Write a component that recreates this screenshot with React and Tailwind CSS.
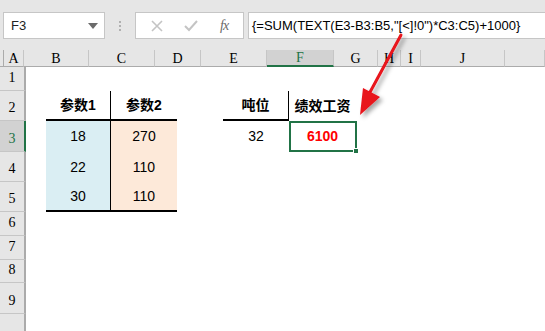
import React from 'react'

const cols = [
  { k: 'A', w: 'w-[20px]' },
  { k: 'B', w: 'w-[65px]' },
  { k: 'C', w: 'w-[66px]' },
  { k: 'D', w: 'w-[46px]' },
  { k: 'E', w: 'w-[66px]' },
  { k: 'F', w: 'w-[67px]' },
  { k: 'G', w: 'w-[44px]' },
  { k: 'H', w: 'w-[23px]' },
  { k: 'I', w: 'w-[20px]' },
  { k: 'J', w: 'w-[84px]' },
  { k: 'K', w: 'w-[40px]' },
]

// row 10 is only partly in view, its label sits below the window
const rows = [
  { n: 1, h: 'h-[24px]' },
  { n: 2, h: 'h-[30px]' },
  { n: 3, h: 'h-[31px]' },
  { n: 4, h: 'h-[30px]' },
  { n: 5, h: 'h-[30px]' },
  { n: 6, h: 'h-[24px]' },
  { n: 7, h: 'h-[24px]' },
  { n: 8, h: 'h-[23px]' },
  { n: 9, h: 'h-[31px]' },
  { n: 10, h: 'h-[30px]', hidden: true },
]

const data = {
  B2: { v: '参数1', cls: 'font-bold text-black border-r border-b-2 border-black' },
  C2: { v: '参数2', cls: 'font-bold text-black border-b-2 border-black' },
  E2: { v: '吨位', cls: 'font-bold text-black border-r border-b-2 border-black' },
  F2: { v: '绩效工资', cls: 'font-bold text-black' },
  B3: { v: '18', cls: 'text-black bg-[#daeef3] border-r border-black' },
  C3: { v: '270', cls: 'text-black bg-[#fde9d9]' },
  B4: { v: '22', cls: 'text-black bg-[#daeef3] border-r border-black' },
  C4: { v: '110', cls: 'text-black bg-[#fde9d9]' },
  B5: { v: '30', cls: 'text-black bg-[#daeef3] border-r border-b-2 border-black' },
  C5: { v: '110', cls: 'text-black bg-[#fde9d9] border-b-2 border-black' },
  E3: { v: '32', cls: 'text-black' },
  F3: { v: '6100', cls: 'font-bold text-[#ff0000]' },
}

const serif = "font-['Liberation_Serif',serif]"

function Toolbar() {
  return (
    <div className="h-[50px] bg-[#e6e6e6] flex items-start pt-[12px] pl-[3px]">
      <div className="w-[102px] h-[27px] bg-white border border-[#c6c6c6] flex items-center justify-between pl-[7px] pr-[6px]">
        <span className="text-[13px] text-[#222]">F3</span>
        <svg width="10" height="6" viewBox="0 0 10 6"><path d="M0 0 L10 0 L5 6 Z" fill="#6b6b6b" /></svg>
      </div>
      <div className="w-[30px] h-[27px] flex flex-col items-center justify-center gap-[2px]">
        <span className="w-[2px] h-[2px] bg-[#b0b0b0]" />
        <span className="w-[2px] h-[2px] bg-[#b0b0b0]" />
        <span className="w-[2px] h-[2px] bg-[#b0b0b0]" />
      </div>
      <div className="w-[109px] h-[27px] bg-white border border-[#c6c6c6] flex items-center justify-around px-[4px]">
        <svg width="12" height="12" viewBox="0 0 12 12"><path d="M1 1 L11 11 M11 1 L1 11" stroke="#c4c4c4" strokeWidth="1.6" /></svg>
        <svg width="14" height="12" viewBox="0 0 14 12"><path d="M1 6 L5 10 L13 1" stroke="#c4c4c4" strokeWidth="2" fill="none" /></svg>
        <span className={`${serif} italic text-[14px] text-[#6a6a6a] tracking-[-1px]`}>fx</span>
      </div>
      <div className="ml-[4px] flex-1 h-[27px] bg-white border border-[#c6c6c6] border-r-0 flex items-center pl-[3px]">
        <span className="text-[13px] text-black whitespace-nowrap">{'{=SUM(TEXT(E3-B3:B5,"[<]!0")*C3:C5)+1000}'}</span>
      </div>
    </div>
  )
}

function HeaderRow() {
  return (
    <div className="flex h-[17px] bg-[#e6e6e6]">
      <div className="w-[26px] h-full border-r border-b border-[#ababab] relative">
        <svg className="absolute right-[3px] bottom-[2px]" width="12" height="12" viewBox="0 0 12 12"><path d="M12 0 L12 12 L0 12 Z" fill="#c8c8c8" /></svg>
      </div>
      {cols.map(c => {
        const sel = c.k === 'F'
        return (
          <div
            key={c.k}
            className={`${c.w} shrink-0 h-full flex items-center justify-center ${serif} text-[14px] ${sel ? 'bg-[#d2d2d2] text-[#217346] border-b-2 border-b-[#217346] border-r border-r-[#c6c6c6]' : 'text-black border-b border-r border-[#c6c6c6] border-b-[#ababab]'}`}
          >
            {c.k === 'K' ? '' : c.k}
          </div>
        )
      })}
    </div>
  )
}

function Row({ r }) {
  const sel = r.n === 3
  return (
    <div className={`flex ${r.h}`}>
      <div
        className={`w-[26px] shrink-0 h-full flex items-end justify-center pb-[2px] ${serif} text-[14px] border-b border-b-[#c6c6c6] ${sel ? 'bg-[#d2d2d2] text-[#217346] border-r-2 border-r-[#217346]' : 'bg-[#e6e6e6] text-black border-r-2 border-r-[#ababab]'}`}
      >
        {r.hidden ? '' : r.n}
      </div>
      {cols.map(c => {
        const cell = data[c.k + r.n]
        const isSel = c.k === 'F' && r.n === 3
        return (
          <div
            key={c.k}
            className={`${c.w} shrink-0 h-full relative flex items-center justify-center text-[14px] font-['Liberation_Sans','Noto_Sans_CJK_SC',sans-serif] ${cell ? cell.cls : ''}`}
          >
            {cell ? cell.v : ''}
            {isSel && (
              <div className="absolute left-0 top-0 right-[-1px] bottom-0 border-2 border-[#217346]">
                <div className="absolute right-[-4px] bottom-[-4px] w-[6px] h-[6px] bg-[#217346] border border-white" />
              </div>
            )}
          </div>
        )
      })}
    </div>
  )
}

function Arrow() {
  return (
    <svg className="absolute left-0 top-0 pointer-events-none" width="545" height="331" viewBox="0 0 545 331">
      <defs>
        <filter id="sh" x="-50%" y="-50%" width="200%" height="200%">
          <feDropShadow dx="3" dy="3" stdDeviation="2" floodColor="#000" floodOpacity="0.35" />
        </filter>
      </defs>
      <g filter="url(#sh)">
        <path d="M401 35 L369 94" stroke="#e8121a" strokeWidth="3" strokeLinecap="round" />
        <path d="M360 115 L363 88 L380 97 Z" fill="#e8121a" />
      </g>
    </svg>
  )
}

export default function App() {
  return (
    <div className="w-[545px] h-[331px] overflow-hidden bg-white relative font-['Liberation_Sans','Noto_Sans_CJK_SC',sans-serif]">
      <Toolbar />
      <HeaderRow />
      {rows.map(r => <Row key={r.n} r={r} />)}
      <Arrow />
    </div>
  )
}
